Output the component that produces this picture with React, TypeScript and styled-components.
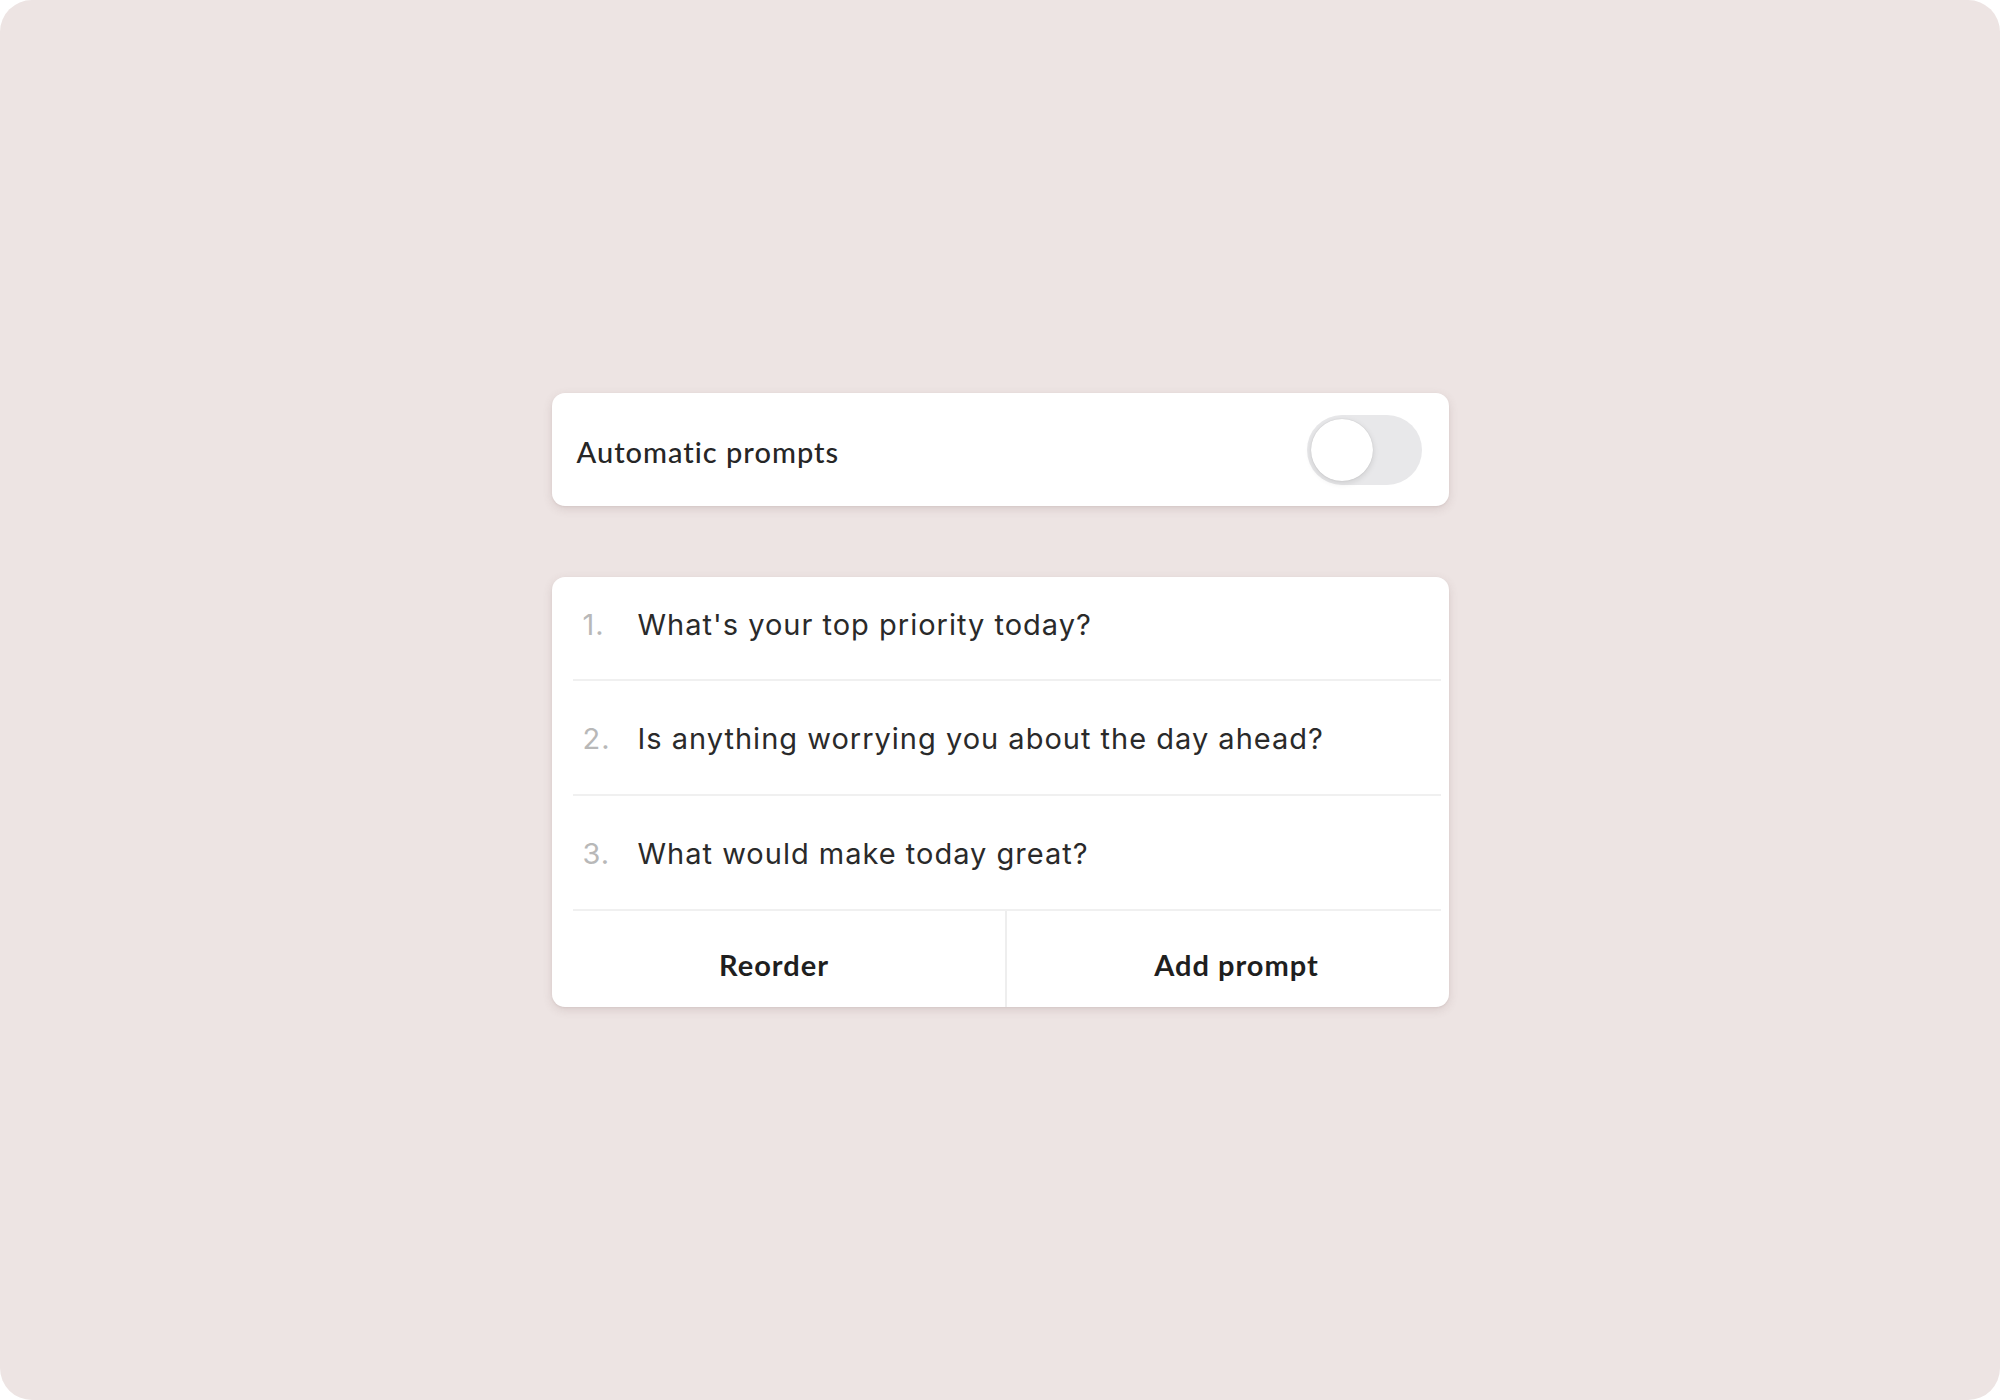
import styled, { createGlobalStyle } from "styled-components";

const prompts = [
  "What's your top priority today?",
  "Is anything worrying you about the day ahead?",
  "What would make today great?",
];

const GlobalStyle = createGlobalStyle`
  html, body {
    margin: 0;
    padding: 0;
    background: #ffffff;
  }
  * {
    box-sizing: border-box;
  }
`;

const App = () => {
  return (
    <>
      <GlobalStyle />
      <Page>
        <Column>
          <SettingCard>
            <SettingLabel>Automatic prompts</SettingLabel>
            <Toggle>
              <Knob />
            </Toggle>
          </SettingCard>
          <ListCard>
            {prompts.map((text, i) => (
              <PromptRow key={text} $first={i === 0}>
                <PromptNumber>{i + 1}.</PromptNumber>
                <PromptText>{text}</PromptText>
              </PromptRow>
            ))}
            <ActionRow>
              <ActionButton $divider $shift={-8}>
                Reorder
              </ActionButton>
              <ActionButton $shift={18}>Add prompt</ActionButton>
            </ActionRow>
          </ListCard>
        </Column>
      </Page>
    </>
  );
};

const Page = styled.div`
  width: 2000px;
  height: 1400px;
  border-radius: 32px;
  background: #ede4e3;
  display: flex;
  align-items: center;
  justify-content: center;
  overflow: hidden;
`;

const Column = styled.div`
  width: 897px;
  display: flex;
  flex-direction: column;
  gap: 71px;
`;

const cardShadow = `
  box-shadow: 0 3px 10px rgba(110, 80, 80, 0.16),
    0 1px 2px rgba(110, 80, 80, 0.08);
`;

const SettingCard = styled.div`
  height: 113px;
  background: #ffffff;
  border-radius: 13px;
  ${cardShadow}
  display: flex;
  align-items: center;
  justify-content: space-between;
  padding: 0 27px 0 25px;
`;

const SettingLabel = styled.span`
  font-family: "Lato", "Noto Sans", sans-serif;
  font-size: 29px;
  font-weight: 500;
  color: #262626;
  letter-spacing: 1px;
  padding-top: 3px;
`;

const Toggle = styled.div`
  width: 115px;
  height: 70px;
  border-radius: 35px;
  background: #e8e8ea;
  display: flex;
  align-items: center;
  padding: 0 4px;
`;

const Knob = styled.div`
  width: 62px;
  height: 62px;
  border-radius: 50%;
  background: #ffffff;
  box-shadow: 0 2px 6px rgba(0, 0, 0, 0.12), 0 0 1px rgba(0, 0, 0, 0.18);
`;

const ListCard = styled.div`
  background: #ffffff;
  border-radius: 13px;
  ${cardShadow}
  display: flex;
  flex-direction: column;
  overflow: hidden;
`;

const PromptRow = styled.div<{ $first?: boolean }>`
  height: ${(p) => (p.$first ? 104 : 115)}px;
  padding-bottom: ${(p) => (p.$first ? 10 : 0)}px;
  display: flex;
  align-items: center;
  padding-left: 31px;
  position: relative;
  font-family: "Inter", "Liberation Sans", sans-serif;
  font-size: 29px;
  letter-spacing: 1px;

  &::after {
    content: "";
    position: absolute;
    left: 21px;
    right: 8px;
    bottom: 0;
    height: 2px;
    background: #f0f0f0;
  }
`;

const PromptNumber = styled.span`
  width: 55px;
  color: #b8b8b8;
  flex-shrink: 0;
`;

const PromptText = styled.span`
  color: #2a2a2a;
`;

const ActionRow = styled.div`
  height: 96px;
  display: grid;
  grid-template-columns: 455px 1fr;
`;

const ActionButton = styled.button<{ $divider?: boolean; $shift: number }>`
  border: none;
  background: transparent;
  border-right: ${(p) => (p.$divider ? "2px solid #eeeeee" : "none")};
  font-family: "Lato", "Noto Sans", sans-serif;
  font-size: 29px;
  font-weight: 700;
  letter-spacing: 1px;
  color: #1f1f1f;
  cursor: pointer;
  padding: 10px 0 0;
  padding-left: ${(p) => Math.max(p.$shift, 0)}px;
  padding-right: ${(p) => Math.max(-p.$shift, 0)}px;
`;

export default App;
